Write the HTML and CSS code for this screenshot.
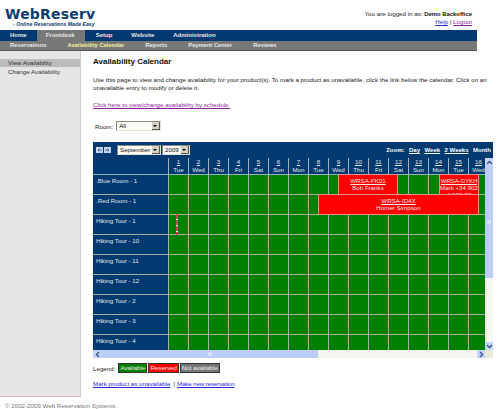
FILE: index.html
```html
<!DOCTYPE html>
<html lang="en">

<head>
    <meta charset="UTF-8">
    <meta name="viewport" content="width=device-width, initial-scale=1.0">
    <title>Availability Calendar</title>
    <link rel="stylesheet" href="styles.css">
</head>

<body>
    <div class="header">
        <div class="logo">
            <div class="logo-name">WebReserv</div>
            <div class="logo-tag">- Online Reservations Made Easy</div>
        </div>
        <div class="login">
            <div>You are logged in as: <b>Demo Backoffice</b></div>
            <div><a href="#">Help</a> | <a href="#" class="visited">Logout</a></div>
        </div>
    </div>

    <div class="nav">
        <a href="#">Home</a>
        <a href="#" class="nav-front">Frontdesk</a>
        <a href="#" class="nav-setup">Setup</a>
        <a href="#" class="nav-site">Website</a>
        <a href="#" class="nav-admin">Administration</a>
    </div>
    <div class="subnav">
        <a href="#">Reservations</a>
        <a href="#" class="current">Availability Calendar</a>
        <a href="#">Reports</a>
        <a href="#">Payment Center</a>
        <a href="#">Reviews</a>
    </div>

    <div class="main">
        <div class="sidebar">
            <a href="#" class="side-link selected">View Availability</a>
            <a href="#" class="side-link">Change Availability</a>
        </div>

        <div class="content">
            <h1>Availability Calendar</h1>
            <p class="intro">Use this page to view and change availability for your product(s). To mark a product as unavailable, click the link below the calendar. Click on an unavailable entry to modify or delete it.</p>
            <p class="schedule"><a href="#" class="visited">Click here to view/change availability by schedule.</a></p>

            <div class="room">
                <span>Room:</span>
                <div class="select room-select">All<i class="drop"></i></div>
            </div>

            <div class="calendar">
                <div class="toolbar">
                    <div class="arrows">
                        <span class="arrow">
                            <svg width="5" height="4" viewBox="0 0 5 4"><path d="M5 2H1M2.5 .5L1 2l1.5 1.5" fill="none" stroke="#2a5aa0" stroke-width=".8"/></svg>
                        </span>
                        <span class="arrow">
                            <svg width="5" height="4" viewBox="0 0 5 4"><path d="M0 2h4M2.5 .5L4 2 2.5 3.5" fill="none" stroke="#2a5aa0" stroke-width=".8"/></svg>
                        </span>
                    </div>
                    <div class="select month-select">September<i class="drop"></i></div>
                    <div class="select year-select">2009<i class="drop"></i></div>
                    <div class="zoom">
                        <b>Zoom:</b>
                        <a href="#">Day</a>
                        <a href="#">Week</a>
                        <a href="#">2 Weeks</a>
                        <b>Month</b>
                    </div>
                </div>

                <div class="cal-body">
                    <div class="cal-view">
                        <div class="days">
                            <div class="room-head"></div>
                            <div class="day"><a href="#">1</a>Tue</div>
                            <div class="day"><a href="#">2</a>Wed</div>
                            <div class="day"><a href="#">3</a>Thu</div>
                            <div class="day"><a href="#">4</a>Fri</div>
                            <div class="day"><a href="#">5</a>Sat</div>
                            <div class="day"><a href="#">6</a>Sun</div>
                            <div class="day"><a href="#">7</a>Mon</div>
                            <div class="day"><a href="#">8</a>Tue</div>
                            <div class="day"><a href="#">9</a>Wed</div>
                            <div class="day"><a href="#">10</a>Thu</div>
                            <div class="day"><a href="#">11</a>Fri</div>
                            <div class="day"><a href="#">12</a>Sat</div>
                            <div class="day"><a href="#">13</a>Sun</div>
                            <div class="day"><a href="#">14</a>Mon</div>
                            <div class="day"><a href="#">15</a>Tue</div>
                            <div class="day"><a href="#">16</a>Wed</div>
                        </div>
                        <div class="row"><div class="row-name">.Blue Room - 1</div><div class="cells"></div></div>
                        <div class="row"><div class="row-name">.Red Room - 1</div><div class="cells"></div></div>
                        <div class="row"><div class="row-name">Hiking Tour - 1</div><div class="cells"></div></div>
                        <div class="row"><div class="row-name">Hiking Tour - 10</div><div class="cells"></div></div>
                        <div class="row"><div class="row-name">Hiking Tour - 11</div><div class="cells"></div></div>
                        <div class="row"><div class="row-name">Hiking Tour - 12</div><div class="cells"></div></div>
                        <div class="row"><div class="row-name">Hiking Tour - 2</div><div class="cells"></div></div>
                        <div class="row"><div class="row-name">Hiking Tour - 3</div><div class="cells"></div></div>
                        <div class="row"><div class="row-name">Hiking Tour - 4</div><div class="cells"></div></div>

                        <div class="booking booking-bob"><a href="#">WRSA-FK01</a>Bob Franks</div>
                        <div class="booking booking-mark"><a href="#">WRSA-GYKH</a>Mark +34 902 4 178 00</div>
                        <div class="booking booking-homer"><a href="#">WRSA-ID4X</a>Homer Simpson</div>
                        <div class="booking booking-tiny"></div>
                    </div>

                    <div class="vscroll">
                        <span class="sb-btn">
                            <svg width="7" height="5" viewBox="0 0 7 5"><path d="M1 4l2.5-2.5L6 4" fill="none" stroke="#34558f" stroke-width="1.4"/></svg>
                        </span>
                        <div class="vtrack"><div class="vthumb"><i class="grip"></i></div></div>
                        <span class="sb-btn">
                            <svg width="7" height="5" viewBox="0 0 7 5"><path d="M1 1l2.5 2.5L6 1" fill="none" stroke="#34558f" stroke-width="1.4"/></svg>
                        </span>
                    </div>
                    <div class="hscroll">
                        <span class="sb-btn">
                            <svg width="5" height="7" viewBox="0 0 5 7"><path d="M4 1L1.5 3.5 4 6" fill="none" stroke="#34558f" stroke-width="1.4"/></svg>
                        </span>
                        <div class="htrack"><div class="hthumb"><i class="grip"></i></div></div>
                        <span class="sb-btn">
                            <svg width="5" height="7" viewBox="0 0 5 7"><path d="M1 1l2.5 2.5L1 6" fill="none" stroke="#34558f" stroke-width="1.4"/></svg>
                        </span>
                    </div>
                    <div class="corner"></div>
                </div>
            </div>

            <div class="legend">
                <span>Legend:</span>
                <span class="tag tag-free">Available</span>
                <span class="tag tag-res">Reserved</span>
                <span class="tag tag-none">Not available</span>
            </div>
            <div class="actions">
                <a href="#">Mark product as unavailable</a><span class="sep">|</span><a href="#" class="new-res">Make new reservation</a>
            </div>
        </div>
    </div>

    <div class="footer">&copy; 2002-2009 Web Reservation Systems.</div>
</body>

</html>
```

FILE: styles.css
```css
body {
    margin: 0;
    padding: 0;
    font-family: "Liberation Sans", Arial, sans-serif;
    font-size: 6.2px;
    color: #222;
    background-color: #fff;
    height: 409px;
    overflow: hidden;
}

a {
    color: #2a2ae0;
}

a.visited {
    color: #8a1f9a;
}

/* Header */
.header {
    display: flex;
    justify-content: space-between;
    height: 30px;
    width: 472px;
}

.logo {
    padding: 8px 0 0 5px;
}

.logo-name {
    font-family: "DejaVu Sans", sans-serif;
    font-size: 14px;
    font-weight: bold;
    line-height: 13px;
    letter-spacing: 0.2px;
    color: #0d3b6e;
}

.logo-tag {
    font-size: 5.2px;
    font-weight: bold;
    font-style: italic;
    line-height: 6px;
    padding-left: 8px;
    color: #0d3b6e;
}

.login {
    padding-top: 10px;
    text-align: right;
    line-height: 8px;
}

.login b {
    font-size: 5.9px;
    color: #111;
}

/* Nav bars */
.nav {
    display: flex;
    width: 477px;
    height: 11px;
    background-color: #003a70;
}

.nav a,
.subnav a {
    display: block;
    font-size: 6px;
    font-weight: bold;
    text-decoration: none;
    color: #e8e8e8;
}

.nav a {
    line-height: 11px;
    padding: 0 10px;
}

.nav a.nav-front {
    padding: 0 10px 0 9px;
    background-color: #787878;
}

.nav a.nav-setup {
    padding-left: 11px;
}

.nav a.nav-site {
    padding-left: 9px;
}

.nav a.nav-admin {
    padding-left: 9px;
}

.subnav {
    display: flex;
    width: 477px;
    height: 9px;
    background-color: #787878;
    border-bottom: 1px solid #555;
}

.subnav a {
    font-size: 5.8px;
    line-height: 9px;
    padding: 0 11px 0 10px;
}

.subnav a.current {
    color: #f2ef9a;
}

/* Main columns */
.main {
    display: flex;
    height: 346px;
}

.sidebar {
    width: 80px;
    background-color: #e6e6e6;
    border-right: 1px solid #d0d0d0;
    border-bottom: 1px solid #e8b0b0;
    padding-top: 8px;
    box-sizing: content-box;
    height: 337px;
}

.side-link {
    display: block;
    height: 8px;
    line-height: 8px;
    padding-left: 8px;
    margin-bottom: 1px;
    text-decoration: none;
    color: #333;
}

.side-link.selected {
    background-color: #bcbcbc;
}

.content {
    flex: 1;
    padding: 5px 0 0 12px;
    min-width: 0;
}

h1 {
    margin: 0;
    font-size: 8px;
    line-height: 12px;
    color: #111;
}

.intro {
    margin: 8px 0 0 0;
    line-height: 8px;
    width: 396px;
}

.schedule {
    margin: 9px 0 0 0;
    line-height: 8px;
}

/* Room picker */
.room {
    display: flex;
    align-items: center;
    gap: 3px;
    margin: 12px 0 0 2px;
    height: 10px;
}

.select {
    position: relative;
    box-sizing: border-box;
    height: 10px;
    line-height: 8px;
    padding-left: 2px;
    background-color: #fbfbf6;
    border: 1px solid;
    border-color: #8a8a80 #e4e2d6 #e4e2d6 #8a8a80;
    color: #111;
}

.room-select {
    width: 45px;
}

.month-select {
    width: 44px;
    margin-left: 6px;
}

.year-select {
    width: 28px;
    margin-left: 1px;
}

.drop {
    position: absolute;
    top: 0;
    right: 0;
    width: 8px;
    height: 8px;
    background-color: #d4d0c8;
    border-right: 1px solid #555;
    border-bottom: 1px solid #555;
    box-sizing: border-box;
}

.drop::after {
    content: "";
    position: absolute;
    left: 1px;
    top: 3px;
    border-left: 2px solid transparent;
    border-right: 2px solid transparent;
    border-top: 2px solid #000;
}

/* Calendar */
.calendar {
    margin-top: 11px;
    width: 400px;
    background-color: #003a70;
}

.toolbar {
    display: flex;
    align-items: center;
    height: 16px;
}

.arrows {
    display: flex;
    gap: 1px;
    margin-left: 3px;
}

.arrow {
    display: flex;
    align-items: center;
    justify-content: center;
    width: 7px;
    height: 6px;
    background-color: #c8d8f0;
}

.zoom {
    margin-left: auto;
    padding-right: 2px;
    font-size: 6px;
    color: #fff;
    display: flex;
    gap: 4.5px;
}

.zoom a {
    color: #fff;
    font-weight: bold;
}

.cal-body {
    display: grid;
    grid-template-columns: 392px 8px;
    grid-template-rows: 192px 8px;
}

.cal-view {
    position: relative;
    overflow: hidden;
    height: 192px;
}

.days {
    display: flex;
    width: 420px;
    height: 17px;
    box-sizing: border-box;
    border-bottom: 1px solid #9fb0c0;
}

.room-head {
    width: 76px;
    flex: none;
    box-sizing: border-box;
    border-right: 1px solid #9fb0c0;
}

.day {
    width: 20px;
    flex: none;
    box-sizing: border-box;
    border-right: 1px solid #9fb0c0;
    text-align: center;
    color: #e8e8e8;
    line-height: 8px;
}

.day a {
    display: block;
    color: #e8e8e8;
}

.row {
    display: flex;
    height: 20px;
    width: 420px;
    box-sizing: border-box;
    border-bottom: 1px solid #a3b0a3;
}

.row-name {
    width: 76px;
    flex: none;
    box-sizing: border-box;
    padding: 2px 0 0 3px;
    color: #e0e6ee;
    line-height: 8px;
    border-right: 1px solid #a3b0a3;
}

.cells {
    flex: 1;
    background-color: #008000;
    background-image: linear-gradient(to right, transparent 19px, #a3b0a3 19px);
    background-size: 20px 100%;
}

.booking {
    position: absolute;
    overflow: hidden;
    height: 21px;
    box-sizing: border-box;
    background-color: #f00;
    border: 1px solid #e89090;
    color: #f4e8e8;
    text-align: center;
    line-height: 7px;
    padding-top: 2px;
}

.booking a {
    display: block;
    white-space: nowrap;
    color: #f4e8e8;
}

.booking-bob {
    left: 245px;
    top: 16px;
    width: 60px;
}

.booking-mark {
    left: 346px;
    top: 16px;
    width: 40px;
}

.booking-mark a {
    letter-spacing: -0.2px;
}

.booking-homer {
    left: 225px;
    top: 36px;
    width: 161px;
}

.booking-tiny {
    left: 83px;
    top: 56px;
    width: 2px;
    padding: 0;
    border: 0;
    background-image: repeating-linear-gradient(#e04050 0, #e04050 5px, #eee 5px, #eee 6px);
}

/* Fake scrollbars */
.vscroll {
    display: flex;
    flex-direction: column;
    background-color: #f6f5f0;
}

.vtrack {
    flex: 1;
}

.vthumb {
    display: flex;
    align-items: center;
    justify-content: center;
    height: 112px;
    background-color: #bccdf8;
}

.hscroll {
    display: flex;
    background-color: #f6f5f0;
}

.htrack {
    flex: 1;
}

.hthumb {
    display: flex;
    align-items: center;
    justify-content: center;
    width: 217px;
    height: 8px;
    background-color: #bccdf8;
}

.grip {
    width: 4px;
    height: 4px;
    background-color: #d4e0fb;
}

.sb-btn {
    display: flex;
    flex: none;
    align-items: center;
    justify-content: center;
    width: 8px;
    height: 8px;
    background-color: #c6d6f8;
}

.corner {
    background-color: #ece9d8;
}

/* Legend + links */
.legend {
    display: flex;
    align-items: center;
    gap: 1px;
    margin-top: 5px;
    height: 10px;
}

.legend span:first-child {
    margin-right: 2px;
}

.tag {
    display: block;
    line-height: 8px;
    padding: 0 1px;
    border: 1px solid #333;
    color: #eee;
}

.tag-free {
    background-color: #008000;
}

.tag-res {
    background-color: #f00;
}

.tag-none {
    background-color: #777;
}

.actions {
    margin-top: 7px;
    line-height: 8px;
}

.new-res {
    letter-spacing: -0.15px;
}

.sep {
    margin: 0 2px 0 3px;
}

.footer {
    padding: 5px 0 0 5px;
    line-height: 8px;
    color: #777;
}
```
